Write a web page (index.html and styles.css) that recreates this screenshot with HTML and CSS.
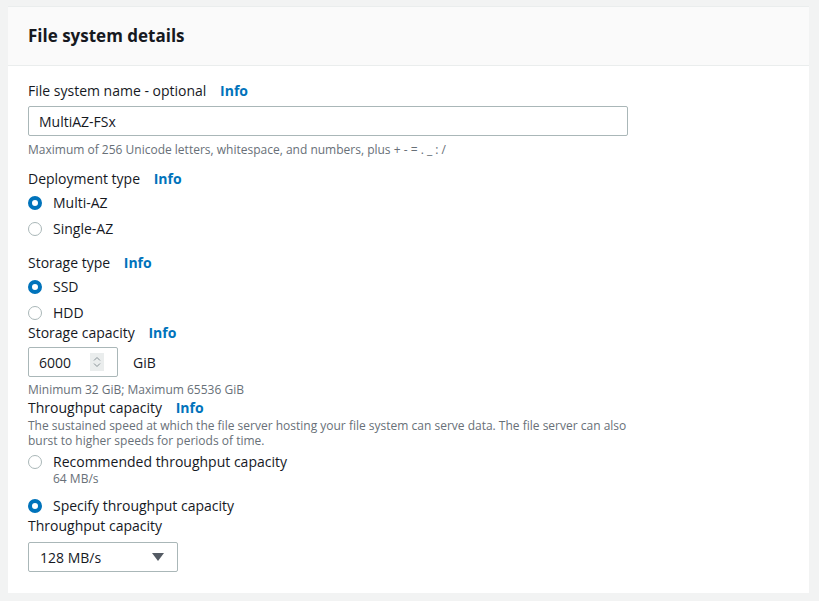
FILE: index.html
```html
<!DOCTYPE html>
<html lang="en">
<head>
  <meta charset="UTF-8" />
  <title>File system details</title>
  <link rel="stylesheet" href="styles.css">
</head>
<body>

  <div class="card">
    <div class="card-header">
      <h2>File system details</h2>
    </div>

    <div class="card-body">
      <div class="field">
        <div class="label">File system name - optional <a class="info" href="#">Info</a></div>
        <input class="text-input" type="text" value="MultiAZ-FSx" />
        <div class="hint first">Maximum of 256 Unicode letters, whitespace, and numbers, plus + - = . _ : /</div>
      </div>

      <div class="field gap-top">
        <div class="label">Deployment type <a class="info" href="#">Info</a></div>
        <div class="radios">
          <label class="radio"><span class="dot checked"></span>Multi-AZ</label>
          <label class="radio"><span class="dot"></span>Single-AZ</label>
        </div>
      </div>

      <div class="field gap-top wide">
        <div class="label">Storage type <a class="info" href="#">Info</a></div>
        <div class="radios">
          <label class="radio"><span class="dot checked"></span>SSD</label>
          <label class="radio"><span class="dot"></span>HDD</label>
        </div>
      </div>

      <div class="field">
        <div class="label">Storage capacity <a class="info" href="#">Info</a></div>
        <div class="number-row">
          <div class="number-input">
            <span>6000</span>
            <span class="spinner">
              <svg width="10" height="14" viewBox="0 0 10 14">
                <path d="M2 5.5 L5 2.5 L8 5.5" fill="none" stroke="#879196" stroke-width="1" />
                <path d="M2 8.5 L5 11.5 L8 8.5" fill="none" stroke="#879196" stroke-width="1" />
              </svg>
            </span>
          </div>
          <span class="unit">GiB</span>
        </div>
        <div class="hint">Minimum 32 GiB; Maximum 65536 GiB</div>
      </div>

      <div class="field">
        <div class="label">Throughput capacity <a class="info" href="#">Info</a></div>
        <div class="desc">The sustained speed at which the file server hosting your file system can serve data. The file server can also burst to higher speeds for periods of time.</div>
        <div class="radios">
          <label class="radio"><span class="dot"></span>Recommended throughput capacity</label>
          <div class="sub">64 MB/s</div>
          <label class="radio"><span class="dot checked"></span>Specify throughput capacity</label>
        </div>
      </div>

      <div class="field">
        <div class="label">Throughput capacity</div>
        <div class="select">
          <span>128 MB/s</span>
          <svg width="12" height="8" viewBox="0 0 12 8">
            <path d="M0 0 H12 L6 8 Z" fill="#545b64" />
          </svg>
        </div>
      </div>
    </div>
  </div>

</body>
</html>
```

FILE: styles.css
```css
body {
  margin: 6px 10px 0 8px;
  background: #f2f3f3;
  font-family: "Open Sans", "Noto Sans", Arial, sans-serif;
  font-size: 14px;
  color: #16191f;
}

.card {
  background: #fff;
  box-shadow: 0 1px 1px 0 rgba(0, 28, 36, 0.3), 1px 1px 1px 0 rgba(0, 28, 36, 0.15), -1px 1px 1px 0 rgba(0, 28, 36, 0.15);
  border-top: 1px solid #eaeded;
}

.card-header {
  background: #fafafa;
  border-bottom: 1px solid #eaeded;
  height: 58px;
  padding: 0 20px;
  display: flex;
  align-items: center;
}

.card-header h2 {
  margin: 0;
  font-size: 17px;
  font-weight: 700;
  line-height: 22px;
}

.card-body {
  padding: 15px 20px 21px;
}

.label {
  line-height: 20px;
}

.info {
  color: #0073bb;
  font-weight: 700;
  text-decoration: none;
  margin-left: 10px;
}

.gap-top {
  margin-top: 11px;
}

.gap-top.wide {
  margin-top: 14px;
}

.text-input {
  display: block;
  box-sizing: border-box;
  width: 600px;
  height: 30px;
  margin-top: 5px;
  padding: 0 10px;
  border: 1px solid #aab7b8;
  border-radius: 2px;
  font-family: inherit;
  font-size: 14px;
  color: #16191f;
}

.hint {
  font-size: 12px;
  line-height: 16px;
  color: #687078;
  margin-top: 5px;
}

.hint.first {
  margin-top: 6px;
}

.radios {
  margin-top: 4px;
  display: flex;
  flex-direction: column;
}

.radio {
  display: flex;
  align-items: center;
  gap: 11px;
  line-height: 20px;
  margin-bottom: 6px;
}

.radio:last-child {
  margin-bottom: 0;
}

.dot {
  box-sizing: border-box;
  width: 14px;
  height: 14px;
  border-radius: 50%;
  border: 1.5px solid #aab7b8;
  background: #fff;
}

.dot.checked {
  border: 4px solid #0073bb;
}

.sub {
  font-size: 12px;
  line-height: 16px;
  color: #687078;
  padding-left: 25px;
  margin: -7px 0 9px;
}

.number-row {
  display: flex;
  align-items: center;
  gap: 15px;
  margin-top: 4px;
}

.number-input {
  box-sizing: border-box;
  width: 90px;
  height: 30px;
  border: 1px solid #aab7b8;
  border-radius: 2px;
  padding: 0 13px 0 10px;
  display: flex;
  align-items: center;
  justify-content: space-between;
}

.spinner {
  display: flex;
  align-items: center;
  justify-content: center;
  width: 14px;
  height: 18px;
  background: #eaeded;
}

.desc {
  font-size: 12px;
  line-height: 15px;
  color: #687078;
  width: 610px;
  margin-bottom: 2px;
}

.select {
  box-sizing: border-box;
  width: 150px;
  height: 30px;
  margin-top: 6px;
  border: 1px solid #aab7b8;
  border-radius: 2px;
  padding: 0 13px 0 11px;
  display: flex;
  align-items: center;
  justify-content: space-between;
}
```
